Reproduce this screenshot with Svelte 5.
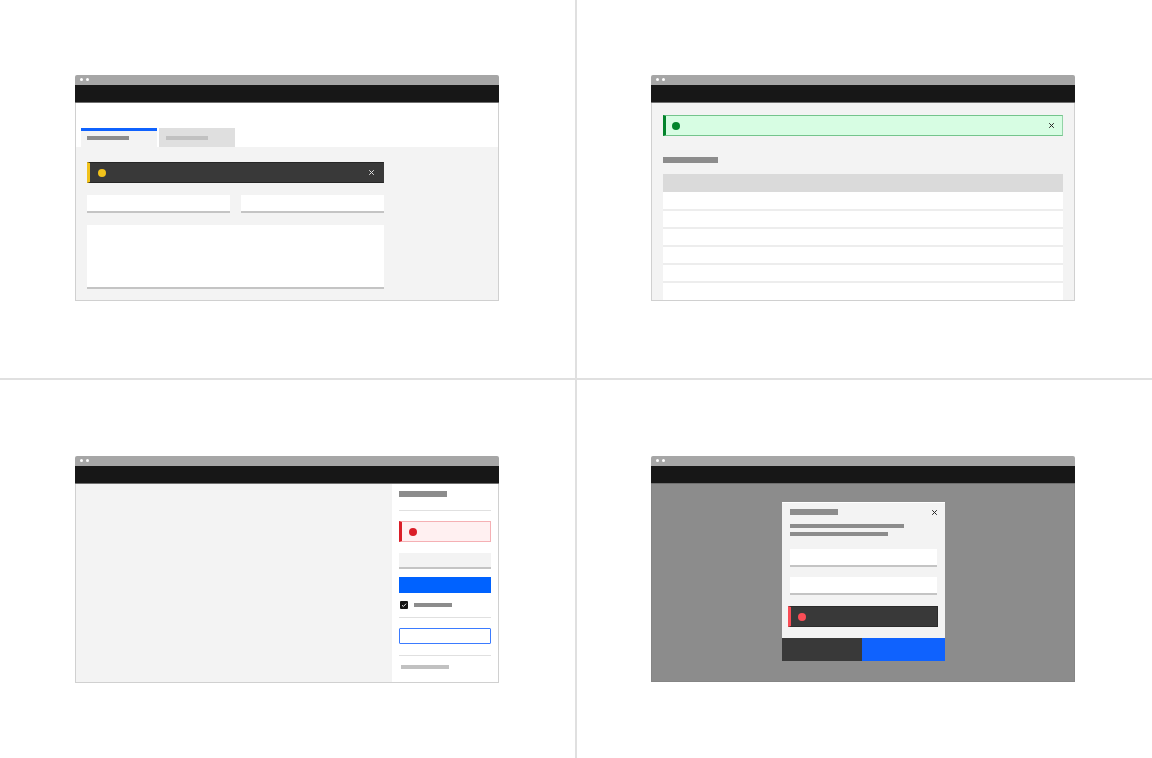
<script>
  const tableRows = [1, 2, 3, 4, 5, 6];

  let remember = $state(true);
</script>

<!-- Browser frame shared by the four examples -->
{#snippet frame(content, variant)}
  <article class="window {variant}">
    <div class="titlebar">
      <span class="light"></span>
      <span class="light"></span>
    </div>
    <header class="header"></header>
    <div class="body">
      {@render content()}
    </div>
  </article>
{/snippet}

{#snippet closeIcon()}
  <svg width="5" height="5" viewBox="0 0 5 5" aria-hidden="true">
    <path d="M0.2 0.2 L4.8 4.8 M4.8 0.2 L0.2 4.8" fill="none" stroke="currentColor" stroke-width="1" />
  </svg>
{/snippet}

{#snippet notification(kind, closable)}
  <div class="notification {kind}" role="status">
    <span class="dot"></span>
    {#if closable}
      <button class="close" aria-label="Close notification">{@render closeIcon()}</button>
    {/if}
  </div>
{/snippet}

{#snippet formPage()}
  <div class="tabs" role="tablist">
    <button class="tab selected" role="tab" aria-selected="true" aria-label="First tab">
      <span class="bar"></span>
    </button>
    <button class="tab" role="tab" aria-selected="false" aria-label="Second tab">
      <span class="bar"></span>
    </button>
  </div>
  <form class="form">
    {@render notification('warning', true)}
    <div class="pair">
      <input class="field" type="text" aria-label="First field" />
      <input class="field" type="text" aria-label="Second field" />
    </div>
    <textarea class="field area" aria-label="Details"></textarea>
  </form>
{/snippet}

{#snippet tablePage()}
  <div class="listing">
    {@render notification('success', true)}
    <div class="bar title"></div>
    <table>
      <thead>
        <tr><th aria-label="Name"></th></tr>
      </thead>
      <tbody>
        {#each tableRows as row (row)}
          <tr><td></td></tr>
        {/each}
      </tbody>
    </table>
  </div>
{/snippet}

{#snippet panelPage()}
  <div class="split">
    <aside class="panel">
      <div class="bar heading"></div>
      <hr />
      {@render notification('error', false)}
      <input class="field tinted" type="text" aria-label="Name" />
      <button class="submit" aria-label="Submit"></button>
      <label class="check">
        <input type="checkbox" bind:checked={remember} aria-label="Remember" />
        <svg width="8" height="8" viewBox="0 0 8 8" aria-hidden="true">
          <rect width="8" height="8" rx="1" fill="#161616" />
          {#if remember}
            <path d="M2 4.2 L3.4 5.5 L6.1 2.7" fill="none" stroke="#fff" stroke-width="0.9" />
          {/if}
        </svg>
        <span class="bar"></span>
      </label>
      <hr />
      <button class="outlined" aria-label="More options"></button>
      <hr />
      <div class="bar note"></div>
    </aside>
  </div>
{/snippet}

{#snippet dialogPage()}
  <div class="backdrop">
    <div class="dialog" role="dialog" aria-label="Dialog">
      <div class="dialog-content">
        <div class="dialog-top">
          <div class="bar heading"></div>
          <button class="close" aria-label="Close dialog">{@render closeIcon()}</button>
        </div>
        <div class="bar long"></div>
        <div class="bar short"></div>
        <input class="field" type="text" aria-label="First value" />
        <input class="field" type="text" aria-label="Second value" />
      </div>
      {@render notification('error-dark', false)}
      <div class="actions">
        <button class="secondary" aria-label="Cancel"></button>
        <button class="primary" aria-label="Save"></button>
      </div>
    </div>
  </div>
{/snippet}

<main>
  <section>{@render frame(formPage, 'plain')}</section>
  <section>{@render frame(tablePage, 'plain')}</section>
  <section class="lower">{@render frame(panelPage, 'plain')}</section>
  <section class="lower">{@render frame(dialogPage, 'dimmed')}</section>
</main>

<style>
  :global(body) {
    margin: 0;
    background: #fff;
    font-family: 'Liberation Sans', sans-serif;
  }

  main,
  main * {
    box-sizing: border-box;
  }

  main {
    display: grid;
    grid-template-columns: 1fr 1fr;
    grid-template-rows: 1fr 1fr;
    min-height: 100vh;
  }

  /* neighbouring outlines meet to form the 2px dividers */
  section {
    padding: 75px 77px 75px 75px;
    box-shadow: 0 0 0 1px #e0e0e0;
  }

  .lower {
    padding-top: 77px;
  }

  button,
  input,
  textarea {
    display: block;
    margin: 0;
    padding: 0;
    border: 0;
    border-radius: 0;
    background: none;
    font: inherit;
    font-size: 10px;
  }

  button {
    cursor: pointer;
  }

  hr {
    width: 100%;
    height: 1px;
    margin: 0;
    border: 0;
    background: #e0e0e0;
  }

  /* Browser frame */
  .titlebar {
    display: flex;
    gap: 3px;
    height: 10px;
    padding: 3px 5px;
    border-radius: 2px 2px 0 0;
    background: #a6a6a6;
  }

  .light {
    width: 3px;
    height: 3px;
    border-radius: 50%;
    background: #fff;
  }

  .header {
    height: 18px;
    background: #171717;
    border-bottom: 1px solid #6f6f6f;
  }

  .body {
    min-height: 198px;
    border: 1px solid #d0d0d0;
    border-top: 0;
    background: #f3f3f3;
  }

  .dimmed .body {
    border-color: #858585;
    background: #8c8c8c;
  }

  .bar {
    display: block;
    height: 4px;
    background: #8c8c8c;
  }

  .field {
    width: 100%;
    height: 18px;
    background: #fff;
    border-bottom: 2px solid #c4c4c4;
  }

  .close {
    display: flex;
    color: #262626;
  }

  /* Notifications */
  .notification {
    display: flex;
    align-items: center;
    justify-content: space-between;
    height: 21px;
    padding: 0 9px 0 8px;
    border: 1px solid;
    border-left-width: 3px;
  }

  .dot {
    width: 8px;
    height: 8px;
    border-radius: 50%;
  }

  .warning {
    border-color: #262626 #393939 #262626 #f1c21b;
    background: #393939;
  }

  .warning .dot {
    background: #f1c21b;
  }

  .warning .close {
    color: #e0e0e0;
  }

  .success {
    padding: 0 8px 0 6px;
    border-color: #74c48c #93d3a6 #74c48c #03842c;
    background: #d7fde3;
  }

  .success .dot {
    background: #03842c;
  }

  .error {
    padding-left: 7px;
    border-color: #f5b0b4 #f5b0b4 #f5b0b4 #da1e28;
    background: #fff0f1;
  }

  .error .dot {
    background: #da1e28;
  }

  .error-dark {
    margin: 0 7px 0 6px;
    padding-left: 7px;
    border-color: #2c2c2c #2c2c2c #2c2c2c #fa4d56;
    background: #393939;
  }

  .error-dark .dot {
    background: #fa4d56;
  }

  /* Form with tabs */
  .tabs {
    display: flex;
    gap: 2px;
    padding: 25px 5px 0;
    background: #fff;
  }

  .tab {
    width: 76px;
    height: 19px;
    padding: 0 7px;
    background: #dfdfdf;
  }

  .tab .bar {
    width: 42px;
    background: #c1c1c1;
  }

  .tab.selected {
    padding: 0 6px;
    border-top: 3px solid #0f62fe;
    padding-bottom: 3px;
    background: #f3f3f3;
  }

  .tab.selected .bar {
    background: #8c8c8c;
  }

  .form {
    display: grid;
    gap: 12px;
    padding: 15px 114px 11px 11px;
  }

  .pair {
    display: grid;
    grid-template-columns: 1fr 1fr;
    gap: 11px;
  }

  .area {
    height: 64px;
    resize: none;
  }

  /* Table page */
  .listing {
    padding: 12px 11px 0;
  }

  .title {
    width: 55px;
    height: 6px;
    margin: 21px 0 11px;
  }

  table {
    width: 100%;
    border-collapse: separate;
    border-spacing: 0;
  }

  th {
    height: 18px;
    padding: 0;
    background: #dadada;
  }

  td {
    height: 18px;
    padding: 0;
    background: #fff;
    border-top: 2px solid #ededed;
  }

  tr:first-child td {
    height: 17px;
    border-top: 0;
  }

  tr:last-child td {
    height: 19px;
  }

  /* Side panel */
  .split {
    display: flex;
    justify-content: flex-end;
  }

  .panel {
    width: 106px;
    padding: 7px 7px 13px;
    background: #fff;
  }

  .heading {
    width: 48px;
    height: 6px;
  }

  .panel .heading {
    margin-bottom: 13px;
  }

  .panel .notification {
    margin: 10px 0 11px;
  }

  .tinted {
    height: 16px;
    background: #f3f3f3;
  }

  .submit {
    width: 100%;
    height: 16px;
    margin: 8px 0;
    background: #0062ff;
  }

  .check {
    display: flex;
    align-items: center;
    gap: 6px;
    margin-bottom: 8px;
    padding-left: 1px;
    cursor: pointer;
  }

  .check input {
    position: absolute;
    width: 8px;
    height: 8px;
    opacity: 0;
  }

  .check .bar {
    width: 38px;
  }

  .outlined {
    width: 100%;
    height: 16px;
    margin: 10px 0 11px;
    border: 1px solid #3b7bff;
    border-radius: 1px;
    background: #fff;
  }

  .note {
    width: 48px;
    margin: 9px 0 0 2px;
    background: #c1c1c1;
  }

  /* Dialog */
  .backdrop {
    display: flex;
    justify-content: center;
    padding: 18px 0 20px;
  }

  .dialog {
    width: 163px;
    border-top: 1px solid #fff;
    background: #f3f3f3;
  }

  .dialog-content {
    padding: 6px 8px 11px;
  }

  .dialog-top {
    display: flex;
    align-items: center;
    justify-content: space-between;
    margin-bottom: 9px;
  }

  .long {
    width: 114px;
    margin-bottom: 4px;
  }

  .short {
    width: 98px;
    margin-bottom: 13px;
  }

  .dialog .field + .field {
    margin-top: 10px;
  }

  .actions {
    display: grid;
    grid-template-columns: 80px 1fr;
    height: 23px;
    margin-top: 11px;
  }

  .secondary {
    background: #393939;
  }

  .primary {
    background: #0f62fe;
  }
</style>
